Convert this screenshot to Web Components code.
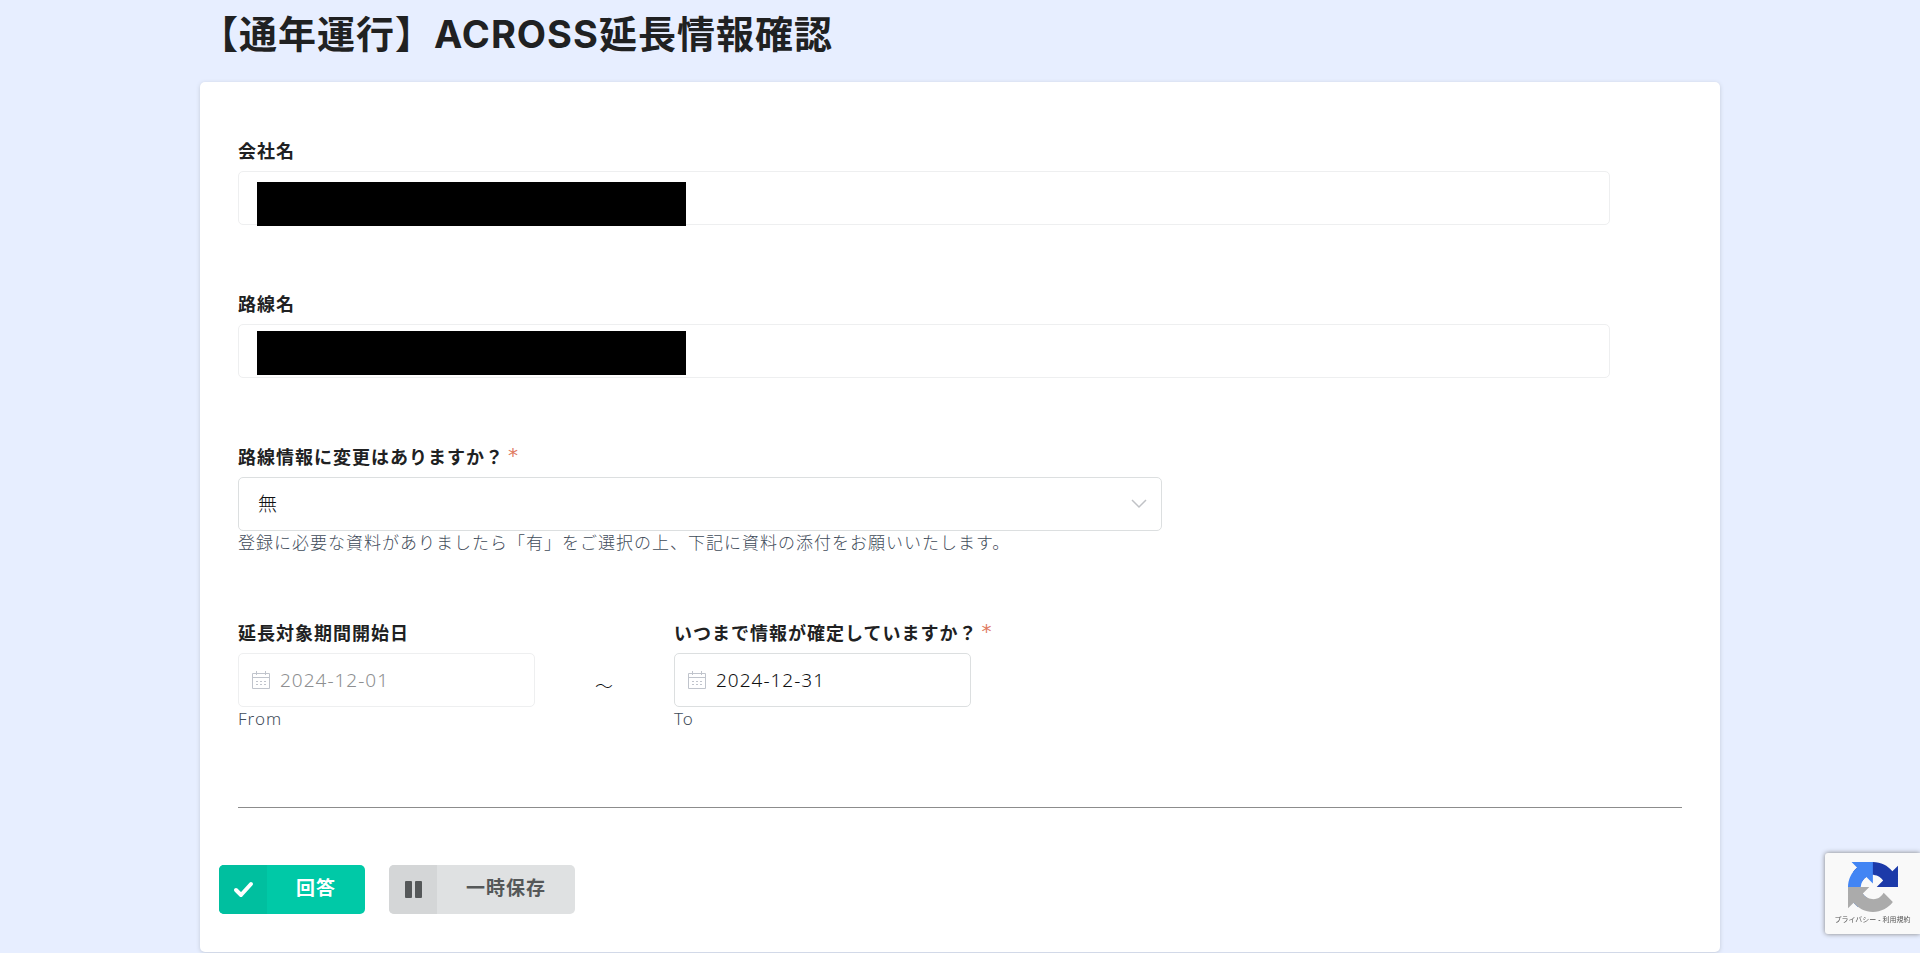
<!DOCTYPE html>
<html lang="ja">
<head>
<meta charset="utf-8">
<meta name="viewport" content="width=device-width, initial-scale=1">
<title>【通年運行】ACROSS延長情報確認</title>
<style>
    body {
        margin: 0;
        min-height: 100vh;
        background: #e7eeff;
        color: #202122;
        font-family: "Noto Sans", "Noto Sans CJK JP", sans-serif;
        font-weight: 300;
        letter-spacing: 1px;
        --line: #dcdfe0;
        --line-soft: #eeeff0;
        --hint: #3f4c5a;
    }
</style>
</head>
<body>
<form-page>
    <span slot="title">【通年運行】ACROSS延長情報確認</span>
    <text-field label="会社名" mask="low"></text-field>
    <text-field label="路線名" mask="high"></text-field>
    <select-field label="路線情報に変更はありますか？" required options="無,有"
        hint="登録に必要な資料がありましたら「有」をご選択の上、下記に資料の添付をお願いいたします。"></select-field>
    <date-range>
        <date-field label="延長対象期間開始日" value="2024-12-01" hint="From" disabled></date-field>
        <date-field label="いつまで情報が確定していますか？" value="2024-12-31" hint="To" required slot="to"></date-field>
    </date-range>
    <icon-button slot="actions" kind="primary" icon="check">回答</icon-button>
    <icon-button slot="actions" kind="plain" icon="pause">一時保存</icon-button>
</form-page>
<captcha-badge></captcha-badge>

<script>
// Styles shared by every field element
const FIELD_CSS = `
    :host { display: block; }
    .label {
        display: flex;
        gap: 4px;
        margin-bottom: 5px;
        font-size: 18px;
        font-weight: 700;
        line-height: 30px;
    }
    .star { color: #e07a5f; font-family: "DejaVu Sans", sans-serif; font-size: 20px; font-weight: 400; line-height: 26px; }
    .box { position: relative; display: flex; align-items: center; }
    input, select {
        box-sizing: border-box;
        width: 100%;
        height: 54px;
        margin: 0;
        padding: 0 19px;
        border: 1px solid var(--line);
        border-radius: 5px;
        background: #fff;
        color: #101112;
        font: inherit;
        font-size: 19px;
        letter-spacing: inherit;
        appearance: none;
    }
    input:disabled { border-color: var(--line-soft); color: #8e8f91; }
    .hint { color: var(--hint); font-size: 17px; line-height: 23px; }
`;

const ICONS = {
    check: '<path d="M3 11l5 5L18 5" fill="none" stroke="currentColor" stroke-width="4" stroke-linecap="round" stroke-linejoin="round"/>',
    pause: '<rect x="2" y="2" width="7" height="17" rx="1" fill="currentColor"/><rect x="12" y="2" width="7" height="17" rx="1" fill="currentColor"/>'
};

class FormPage extends HTMLElement {
    constructor() {
        super();
        this.attachShadow({ mode: 'open' });
    }

    connectedCallback() {
        this.shadowRoot.innerHTML = `
            <style>
                :host { display: block; max-width: 1520px; margin: 0 auto; }
                h1 {
                    margin: 0;
                    padding: 6px 0 20px;
                    font-family: Inter, "Noto Sans CJK JP", sans-serif;
                    font-size: 38px;
                    font-weight: 700;
                    line-height: 56px;
                }
                form {
                    background: #fff;
                    border-radius: 5px;
                    box-shadow: 0 1px 4px #c3cad8;
                    padding: 54px 19px 38px;
                }
                .fields { display: flex; flex-direction: column; gap: 64px; padding: 0 19px; }
                hr { margin: 77px 19px 57px; border: 0; border-top: 1px solid #8c8c8c; }
                .actions { display: flex; flex-wrap: wrap; gap: 24px; }
            </style>
            <h1><slot name="title"></slot></h1>
            <form>
                <div class="fields"><slot></slot></div>
                <hr>
                <div class="actions"><slot name="actions"></slot></div>
            </form>
        `;
    }
}

class BaseField extends HTMLElement {
    constructor() {
        super();
        this.attachShadow({ mode: 'open' });
    }

    connectedCallback() {
        const star = this.hasAttribute('required') ? '<span class="star">*</span>' : '';
        const hint = this.getAttribute('hint');
        this.shadowRoot.innerHTML = `
            <style>${FIELD_CSS}${this.css()}</style>
            <label class="label" for="control">${this.getAttribute('label')}${star}</label>
            <div class="box">${this.control()}</div>
            ${hint ? `<div class="hint">${hint}</div>` : ''}
        `;
    }

    css() { return ''; }
    control() { return ''; }
}

class TextField extends BaseField {
    css() {
        return `
            .box { width: 95%; }
            .mask {
                position: absolute;
                left: 19px;
                top: 7px;
                width: 429px;
                height: 44px;
                background: #000;
            }
            .low { top: 11px; }
        `;
    }

    control() {
        return `<input id="control" type="text" disabled><span class="mask ${this.getAttribute('mask')}"></span>`;
    }
}

class SelectField extends BaseField {
    css() {
        return `
            .box { width: 64%; }
            svg { position: absolute; right: 14px; width: 18px; height: 18px; pointer-events: none; }
        `;
    }

    control() {
        const options = this.getAttribute('options').split(',').map(o => `<option>${o}</option>`).join('');
        return `
            <select id="control">${options}</select>
            <svg viewBox="0 0 18 18" fill="none" stroke="#c0c2c6" stroke-width="1.5"><path d="M2 5l7 7 7-7"/></svg>
        `;
    }
}

class DateField extends BaseField {
    css() {
        return `
            .box { width: 297px; }
            input { padding-left: 41px; }
            .label { white-space: nowrap; }
            svg { position: absolute; left: 14px; width: 18px; height: 18px; }
        `;
    }

    control() {
        const disabled = this.hasAttribute('disabled') ? 'disabled' : '';
        return `
            <input id="control" type="text" value="${this.getAttribute('value')}" ${disabled}>
            <svg viewBox="0 0 18 18" fill="none" stroke="#c0c4cc">
                <path d="M.5 2.5h17v15H.5zM.5 6.5h17M4.5 0v4M13.5 0v4"/>
                <path d="M4 10.5h2M8 10.5h2M12 10.5h2M4 13.5h2M8 13.5h2M12 13.5h2"/>
            </svg>
        `;
    }
}

class DateRange extends HTMLElement {
    constructor() {
        super();
        this.attachShadow({ mode: 'open' });
    }

    connectedCallback() {
        this.shadowRoot.innerHTML = `
            <style>
                :host { display: flex; }
                .from { width: 297px; }
                .tilde { width: 139px; padding-top: 35px; color: #101112; font-size: 18px; line-height: 66px; text-align: center; }
            </style>
            <div class="from"><slot></slot></div>
            <div class="tilde">～</div>
            <slot name="to"></slot>
        `;
    }
}

class IconButton extends HTMLElement {
    constructor() {
        super();
        this.attachShadow({ mode: 'open' });
    }

    connectedCallback() {
        this.shadowRoot.innerHTML = `
            <style>
                :host { display: block; --bg: #dfe1e2; --side: #d4d6d7; --ink: #555859; }
                :host([kind="primary"]) { --bg: #00c9a7; --side: #00bf9f; --ink: #fff; }
                button {
                    display: flex;
                    height: 49px;
                    padding: 0;
                    border: 0;
                    border-radius: 5px;
                    overflow: hidden;
                    background: var(--bg);
                    color: var(--ink);
                    font: inherit;
                    font-size: 19px;
                    font-weight: 700;
                    letter-spacing: inherit;
                    cursor: pointer;
                }
                .icon { display: flex; align-items: center; justify-content: center; width: 48px; height: 49px; background: var(--side); }
                svg { width: 21px; height: 21px; }
                .text { padding: 0 29px; line-height: 46px; }
            </style>
            <button type="button">
                <span class="icon"><svg viewBox="0 0 21 21">${ICONS[this.getAttribute('icon')]}</svg></span>
                <span class="text"><slot></slot></span>
            </button>
        `;
    }
}

class CaptchaBadge extends HTMLElement {
    constructor() {
        super();
        this.attachShadow({ mode: 'open' });
    }

    connectedCallback() {
        this.shadowRoot.innerHTML = `
            <style>
                :host {
                    position: fixed;
                    right: 0;
                    bottom: 19px;
                    box-sizing: border-box;
                    display: flex;
                    flex-direction: column;
                    align-items: center;
                    gap: 3px;
                    width: 95px;
                    height: 81px;
                    padding: 9px 0 0;
                    border-radius: 3px 0 0 3px;
                    background: #f9f9f9;
                    box-shadow: 0 0 5px #808080;
                    letter-spacing: 0;
                }
                svg { width: 50px; height: 50px; }
                .links { display: flex; gap: 2px; font-size: 7px; font-weight: 400; line-height: 10px; white-space: nowrap; }
                a { color: #555; text-decoration: none; }
            </style>
            <svg viewBox="0 0 64 64">
                <path fill="#1c3aa9" d="M64 31.955l-.033-1.37V4.687l-7.16 7.16C50.948 4.674 42.033.093 32.05.093c-10.4 0-19.622 4.96-25.458 12.64l11.736 11.86a15.55 15.55 0 0 1 4.754-5.334c2.05-1.6 4.952-2.906 8.968-2.906.485 0 .86.057 1.135.163 4.976.393 9.288 3.14 11.828 7.124l-8.307 8.307L64 31.953"/>
                <path fill="#4285f4" d="M31.862.094l-1.37.033H4.594l7.16 7.16C4.58 13.147 0 22.06 0 32.046c0 10.4 4.96 19.622 12.64 25.458L24.5 45.768a15.55 15.55 0 0 1-5.334-4.754c-1.6-2.05-2.906-4.952-2.906-8.968 0-.485.057-.86.163-1.135.393-4.976 3.14-9.288 7.124-11.828l8.307 8.307L31.86.095"/>
                <path fill="#ababab" d="M.001 32.045l.033 1.37v25.898l7.16-7.16c5.86 7.173 14.774 11.754 24.76 11.754 10.4 0 19.622-4.96 25.458-12.64l-11.736-11.86a15.55 15.55 0 0 1-4.754 5.334c-2.05 1.6-4.952 2.906-8.968 2.906-.485 0-.86-.057-1.135-.163-4.976-.393-9.288-3.14-11.828-7.124l8.307-8.307c-10.522.04-22.4.066-27.295-.005"/>
            </svg>
            <div class="links"><a href="#privacy">プライバシー</a><span>-</span><a href="#terms">利用規約</a></div>
        `;
    }
}

customElements.define('form-page', FormPage);
customElements.define('text-field', TextField);
customElements.define('select-field', SelectField);
customElements.define('date-field', DateField);
customElements.define('date-range', DateRange);
customElements.define('icon-button', IconButton);
customElements.define('captcha-badge', CaptchaBadge);
</script>
</body>
</html>
